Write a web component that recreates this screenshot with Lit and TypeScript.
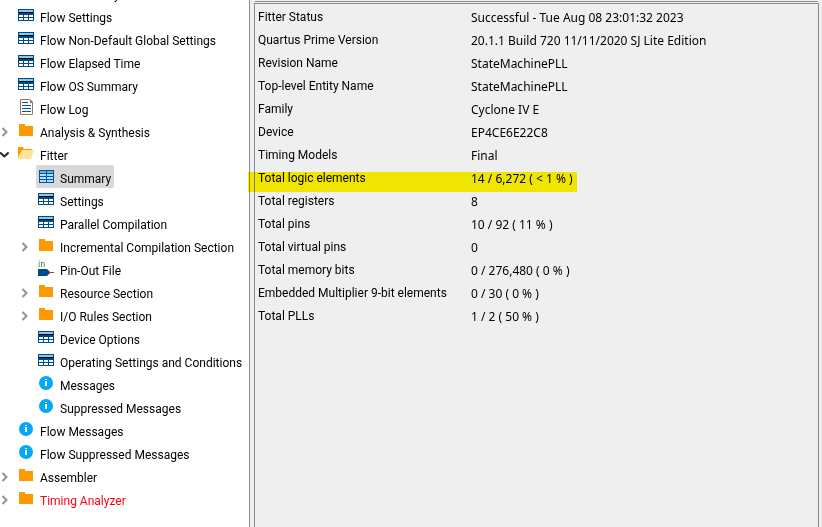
import { LitElement, html, css, svg, nothing } from "lit";
import { customElement, property } from "lit/decorators.js";
import { classMap } from "lit/directives/class-map.js";

type IconName = "table" | "report" | "log" | "folder" | "open" | "pin" | "info";

interface TreeItem {
  label: string;
  icon: IconName;
  level?: number;
  arrow?: "closed" | "open";
  selected?: boolean;
  failed?: boolean;
}

const items: TreeItem[] = [
  { label: "Flow Summary", icon: "table" },
  { label: "Flow Settings", icon: "table" },
  { label: "Flow Non-Default Global Settings", icon: "table" },
  { label: "Flow Elapsed Time", icon: "table" },
  { label: "Flow OS Summary", icon: "table" },
  { label: "Flow Log", icon: "log" },
  { label: "Analysis & Synthesis", icon: "folder", arrow: "closed" },
  { label: "Fitter", icon: "open", arrow: "open" },
  { label: "Summary", icon: "report", level: 1, selected: true },
  { label: "Settings", icon: "table", level: 1 },
  { label: "Parallel Compilation", icon: "table", level: 1 },
  { label: "Incremental Compilation Section", icon: "folder", level: 1, arrow: "closed" },
  { label: "Pin-Out File", icon: "pin", level: 1 },
  { label: "Resource Section", icon: "folder", level: 1, arrow: "closed" },
  { label: "I/O Rules Section", icon: "folder", level: 1, arrow: "closed" },
  { label: "Device Options", icon: "table", level: 1 },
  { label: "Operating Settings and Conditions", icon: "table", level: 1 },
  { label: "Messages", icon: "info", level: 1 },
  { label: "Suppressed Messages", icon: "info", level: 1 },
  { label: "Flow Messages", icon: "info" },
  { label: "Flow Suppressed Messages", icon: "info" },
  { label: "Assembler", icon: "folder", arrow: "closed" },
  { label: "Timing Analyzer", icon: "folder", arrow: "closed", failed: true },
];

const summary: [string, string][] = [
  ["Fitter Status", "Successful - Tue Aug 08 23:01:32 2023"],
  ["Quartus Prime Version", "20.1.1 Build 720 11/11/2020 SJ Lite Edition"],
  ["Revision Name", "StateMachinePLL"],
  ["Top-level Entity Name", "StateMachinePLL"],
  ["Family", "Cyclone IV E"],
  ["Device", "EP4CE6E22C8"],
  ["Timing Models", "Final"],
  ["Total logic elements", "14 / 6,272 ( < 1 % )"],
  ["Total registers", "8"],
  ["Total pins", "10 / 92 ( 11 % )"],
  ["Total virtual pins", "0"],
  ["Total memory bits", "0 / 276,480 ( 0 % )"],
  ["Embedded Multiplier 9-bit elements", "0 / 30 ( 0 % )"],
  ["Total PLLs", "1 / 2 ( 50 % )"],
];

const icons = {
  table: svg`
    <path fill="#004a86" d="M0 2h16v12H0z"/>
    <path fill="#7fcdf5" d="M1 3h14v2H1z"/>
    <path fill="#000" d="M1 5h14v1H1z"/>
    <path fill="#fff" d="M1 8h4v2H1zM6 8h4v2H6zM11 8h4v2h-4zM1 11h4v2H1zM6 11h4v2H6zM11 11h4v2h-4z"/>`,
  report: svg`
    <path fill="#00559b" d="M1 2h15v13H1z"/>
    <path fill="#5bb4ee" d="M2 3h6v2H2zM9 3h6v2H9z"/>
    <path fill="#b5dcfa" d="M2 6h6v2H2zM9 6h6v2H9zM2 9h6v2H2zM9 9h6v2H9zM2 12h6v2H2zM9 12h6v2H9z"/>`,
  log: svg`
    <path fill="#fffbee" stroke="#8d7b6c" d="M2.500.5h9l3 3v12h-12z"/>
    <path fill="#8d7b6c" d="M12 0l3 3v1h-3z"/>
    <path fill="#0054a6" d="M4 3h6v1H4zM4 6h9v1H4zM4 9h9v1H4zM4 12h9v1H4z"/>`,
  folder: svg`<path fill="#ff9900" d="M1 2h6v2h8v10H1z"/>`,
  open: svg`
    <path fill="#ff9900" d="M0 2h5l1 2h8v3H3L0 13z"/>
    <path fill="#ffe29a" d="M4 5h12l-3 9H0z"/>`,
  pin: svg`
    <text x="0" y="7" fill="#2c7a2c" font-family="DejaVu Sans, sans-serif" font-size="8">in</text>
    <path fill="#004a86" d="M0 9h9l3 3v1l-3 3H0z"/>
    <path fill="#ee1c25" d="M11 12h5v1h-5z"/>`,
  info: svg`
    <circle cx="8" cy="8" r="7" fill="#03a9f4"/>
    <path fill="#fff" d="M7 4h2v1H7zM7 6h2v5H7z"/>`,
};

@customElement("tree-row")
class TreeRow extends LitElement {
  @property({ attribute: false }) item!: TreeItem;

  static styles = css`
    :host { display: block; }
    .row { display: flex; height: 23px; }
    .nested { padding-left: 20px; }
    .toggle {
      flex: none; width: 16px; height: 23px; padding: 0;
      border: 0; background: none;
    }
    .icon {
      flex: none; display: block; width: 16px; height: 16px;
      margin-top: 3px; overflow: visible;
    }
    .item {
      display: flex; gap: 6px; padding: 0 3px 0 2px; border-radius: 2px;
      color: inherit; text-decoration: none; white-space: nowrap;
    }
    .label { line-height: 28px; height: 23px; }
    .selected { background: #d9d9d9; }
    .failed { color: #ff0010; }
  `;

  render() {
    const { label, icon, level, arrow, selected, failed } = this.item;
    return html`<div class=${classMap({ row: true, nested: level === 1 })}>
      ${arrow
        ? html`<button class="toggle" aria-label="Toggle ${label}" aria-expanded=${arrow === "open"}>
            <svg class="icon" viewBox="0 0 16 16" fill="none" stroke-width="2">
              ${arrow === "open"
                ? svg`<path stroke="#222" d="M0 5.500l4.300 4 4.300-4"/>`
                : svg`<path stroke="#929292" d="M2.500 4l4 4-4 4"/>`}
            </svg>
          </button>`
        : html`<span class="toggle"></span>`}
      <a href="#" class=${classMap({ item: true, selected: !!selected, failed: !!failed })}
        aria-current=${selected ? "page" : nothing}>
        <svg class="icon" viewBox="0 0 16 16" aria-hidden="true">${icons[icon]}</svg>
        <span class="label">${label}</span>
      </a>
    </div>`;
  }
}

@customElement("app-root")
class AppRoot extends LitElement {
  static styles = css`
    :host {
      display: flex; gap: 4px; min-height: 100vh; box-sizing: border-box;
      overflow: hidden; background: #efefef; color: #000;
      font: 12px Roboto, "Noto Sans", sans-serif;
    }
    .tree {
      flex: none; box-sizing: border-box; width: 250px;
      background: #fff; border-right: 1px solid #858a93;
    }
    .list { list-style: none; padding: 0; margin: -19px 0 0; }
    .report { flex: 1; display: flex; flex-direction: column; margin-right: 3px; }
    .edge { height: 1px; margin: 1px; background: #858a93; }
    .panel { flex: 1; border: 1px solid #858a93; border-bottom: 0; padding: 2px 3px; }
    .data { border-collapse: collapse; white-space: nowrap; }
    .name, .value {
      height: 23px; padding: 0; line-height: 23px;
      font-weight: 400; text-align: left;
    }
    .name { width: 213px; }
    .value { font: 12px "Noto Sans", sans-serif; }
    .marked { position: relative; }
    .marked::after {
      content: ""; position: absolute; left: -10px; top: 5px;
      width: 329px; height: 20px;
      background: #fff500; mix-blend-mode: multiply;
    }
  `;

  render() {
    return html`
      <nav class="tree" aria-label="Table of contents">
        <ul class="list">
          ${items.map((item) => html`<li><tree-row .item=${item}></tree-row></li>`)}
        </ul>
      </nav>
      <main class="report">
        <div class="edge"></div>
        <section class="panel">
          <table class="data">
            ${summary.map(([name, value]) => html`<tr>
              <th scope="row" class=${classMap({ name: true, marked: name === "Total logic elements" })}>${name}</th>
              <td class="value">${value}</td>
            </tr>`)}
          </table>
        </section>
      </main>`;
  }
}
